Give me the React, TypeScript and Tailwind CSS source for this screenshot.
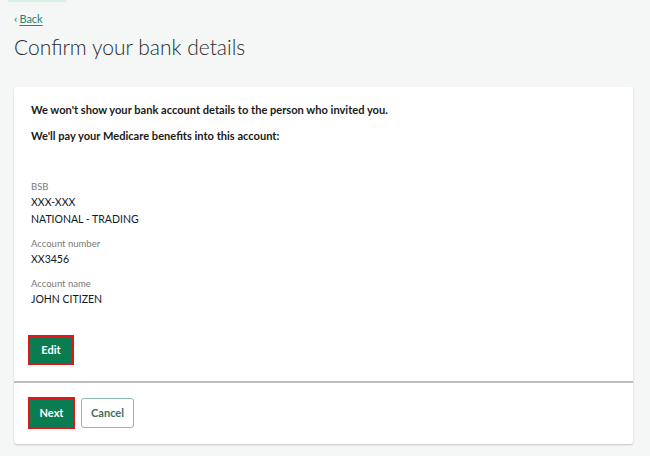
import React from 'react';

const Field = ({ label, children }: { label: string; children: React.ReactNode }) => (
  <div className="flex flex-col">
    <span className="text-[9.5px] leading-[14px] text-[#7a7a7a]">{label}</span>
    {children}
  </div>
);

export default function App() {
  return (
    <div className="relative h-[456px] w-[650px] overflow-hidden bg-[#f4f7f6] font-['Lato',sans-serif] text-[#1a1a1a]">
      <div className="absolute left-[8px] top-0 h-[2px] w-[58px] bg-[#d3f1e4]" />
      <div className="px-[14px] pt-[12px]">
        <a href="#" className="flex items-center gap-[2px] text-[11px] leading-[14px] text-[#2f7f6b]">
          <span className="text-[12px]">&lsaquo;</span>
          <span className="underline underline-offset-2">Back</span>
        </a>
        <h1 className="mt-[6px] text-[21px] font-light leading-[30px] text-[#2b2b2b]">Confirm your bank details</h1>

        <div className="mt-[25px] w-[619px] rounded-[3px] bg-white shadow-[0_1px_2px_rgba(0,0,0,0.2)]">
          <div className="px-[17px] pt-[15px] pb-[16px]">
            <p className="text-[11.1px] font-bold leading-[16px]">We won't show your bank account details to the person who invited you.</p>
            <p className="mt-[10px] text-[11.1px] font-bold leading-[16px]">We'll pay your Medicare benefits into this account:</p>

            <div className="mt-[36px] flex flex-col gap-[9px] text-[10.5px] leading-[17px] text-[#111827]">
              <Field label="BSB">
                <span>XXX-XXX</span>
                <span>NATIONAL - TRADING</span>
              </Field>
              <Field label="Account number">
                <span>XX3456</span>
              </Field>
              <Field label="Account name">
                <span>JOHN CITIZEN</span>
              </Field>
            </div>

            <button className="-ml-[3px] mt-[27px] h-[30px] w-[46px] border-2 border-[#e0161b] bg-[#0b7b52] text-[11px] font-bold text-white">
              Edit
            </button>
          </div>
          <div className="border-t-2 border-[#bdbdbd] px-[14px] pt-[14px] pb-[15px]">
            <div className="flex items-center gap-[6px]">
              <button className="h-[32px] w-[47px] border-2 border-[#e0161b] bg-[#0b7b52] text-[11px] font-bold text-white">
                Next
              </button>
              <button className="h-[30px] w-[53px] rounded-[3px] border border-[#8bbcae] bg-white text-[11px] font-bold text-[#3d6e63]">
                Cancel
              </button>
            </div>
          </div>
        </div>
      </div>
    </div>
  );
}
